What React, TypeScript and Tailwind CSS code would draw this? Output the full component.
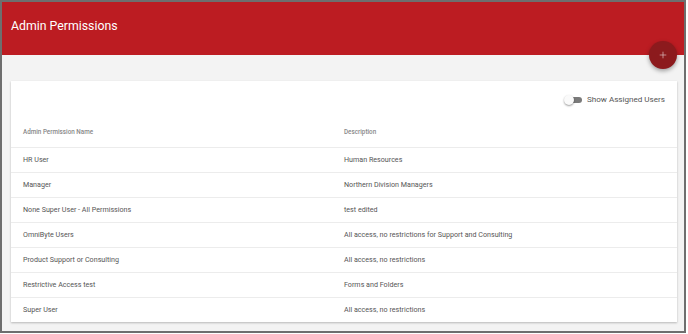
import { Plus } from "lucide-react";

const rows = [
  { name: "HR User", description: "Human Resources" },
  { name: "Manager", description: "Northern Division Managers" },
  { name: "None Super User - All Permissions", description: "test edited" },
  { name: "OmniByte Users", description: "All access, no restrictions for Support and Consulting" },
  { name: "Product Support or Consulting", description: "All access, no restrictions" },
  { name: "Restrictive Access test", description: "Forms and Folders" },
  { name: "Super User", description: "All access, no restrictions" },
];

function Toggle() {
  return (
    <div className="relative h-[10px] w-[18px]">
      <div className="absolute left-[1px] top-[2px] h-[6px] w-[17px] rounded-full bg-[#7a7a7a]" />
      <div className="absolute left-0 top-0 h-[10px] w-[10px] rounded-full bg-[#fafafa] shadow-[0_1px_2px_rgba(0,0,0,0.4)]" />
    </div>
  );
}

export default function App() {
  return (
    <div className="relative h-[333px] w-[686px] border-2 border-[#6e6e6e] bg-[#f3f3f3] font-['Roboto',sans-serif]">
      <header className="h-[53px] bg-[#bc1c22] pl-[9px] pt-[16px]">
        <h1 className="text-[12.3px] leading-[16px] text-white">Admin Permissions</h1>
      </header>

      <button className="absolute left-[647px] top-[39px] flex h-[28px] w-[28px] items-center justify-center rounded-full bg-[#8c1a1d] text-[#e0c4c5] shadow-[0_2px_4px_rgba(0,0,0,0.35)]">
        <Plus size={10} strokeWidth={1.6} />
      </button>

      <div className="ml-[9px] mr-[7px] mt-[26px] bg-white shadow-[0_1px_2px_rgba(0,0,0,0.25)]">
        <div className="flex h-[37px] items-center justify-end gap-[5px] pr-[12px]">
          <Toggle />
          <span className="text-[8.1px] text-[#555]">Show Assigned Users</span>
        </div>

        <div className="flex h-[29px] items-center pl-[12px] text-[6.3px] font-medium text-[#888]">
          <div className="w-[321px]">Admin Permission Name</div>
          <div>Description</div>
        </div>

        {rows.map((row) => (
          <div
            key={row.name}
            className="flex h-[25px] items-center border-t border-[#ececec] pl-[12px] text-[7.15px] text-[#555]"
          >
            <div className="w-[321px]">{row.name}</div>
            <div>{row.description}</div>
          </div>
        ))}
      </div>
    </div>
  );
}
